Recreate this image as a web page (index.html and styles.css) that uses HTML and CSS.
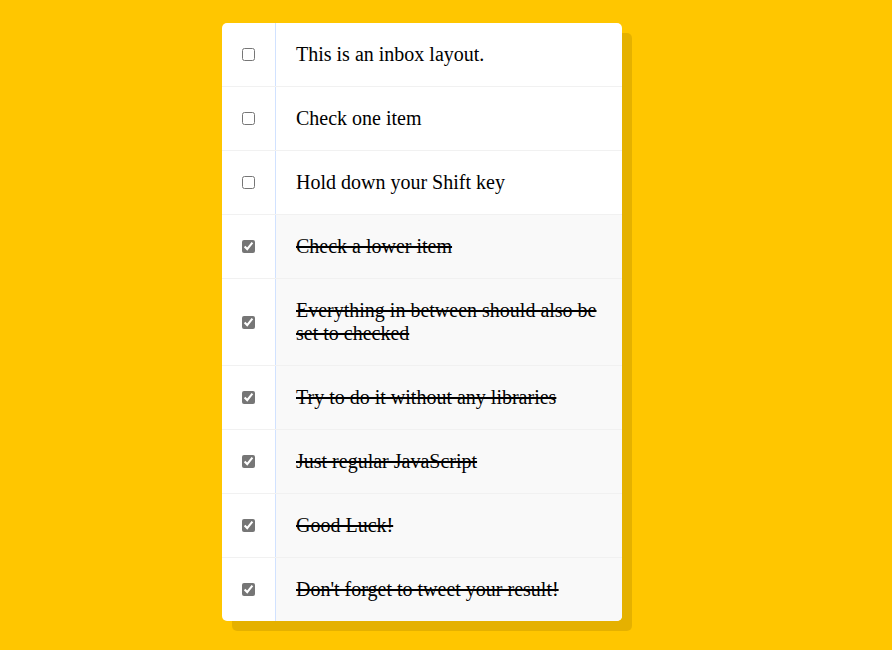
FILE: index.html
```html
<!DOCTYPE html>
<html lang="en">
<head>
<meta charset="UTF-8">
<title>Hold Shift to Check Multiple Checkboxes</title>
<link rel="stylesheet" href="styles.css">
</head>
<body>
<div class="inbox">
  <div class="item"><input type="checkbox"><p>This is an inbox layout.</p></div>
  <div class="item"><input type="checkbox"><p>Check one item</p></div>
  <div class="item"><input type="checkbox"><p>Hold down your Shift key</p></div>
  <div class="item"><input type="checkbox" checked><p>Check a lower item</p></div>
  <div class="item"><input type="checkbox" checked><p>Everything in between should also be set to checked</p></div>
  <div class="item"><input type="checkbox" checked><p>Try to do it without any libraries</p></div>
  <div class="item"><input type="checkbox" checked><p>Just regular JavaScript</p></div>
  <div class="item"><input type="checkbox" checked><p>Good Luck!</p></div>
  <div class="item"><input type="checkbox" checked><p>Don't forget to tweet your result!</p></div>
</div>
</body>
</html>
```
FILE: styles.css
```css
html {
  font-family: "Liberation Sans", sans-serif;
  background: #ffc600;
}

body {
  margin: 0;
  padding: 23px 0 40px;
}

.inbox {
  width: 400px;
  margin: 0 0 0 222px;
  background: #ffffff;
  border-radius: 5px;
  box-shadow: 10px 10px 0 rgba(0, 0, 0, 0.1);
  overflow: hidden;
}

.item {
  display: flex;
  align-items: center;
  border-bottom: 1px solid #f1f1f1;
}

.item:last-child {
  border-bottom: 0;
}

.item input[type="checkbox"] {
  margin: 20px;
  width: 13px;
  height: 13px;
  accent-color: #767676;
  flex: none;
}

.item p {
  margin: 0;
  padding: 20px;
  flex: 1;
  align-self: stretch;
  font-family: "Liberation Serif", "Times New Roman", serif;
  font-size: 20px;
  font-weight: 200;
  line-height: 23px;
  color: #000;
  border-left: 1px solid #d1e2ff;
}

.item input:checked + p {
  background: #f9f9f9;
  text-decoration: line-through;
}
```
